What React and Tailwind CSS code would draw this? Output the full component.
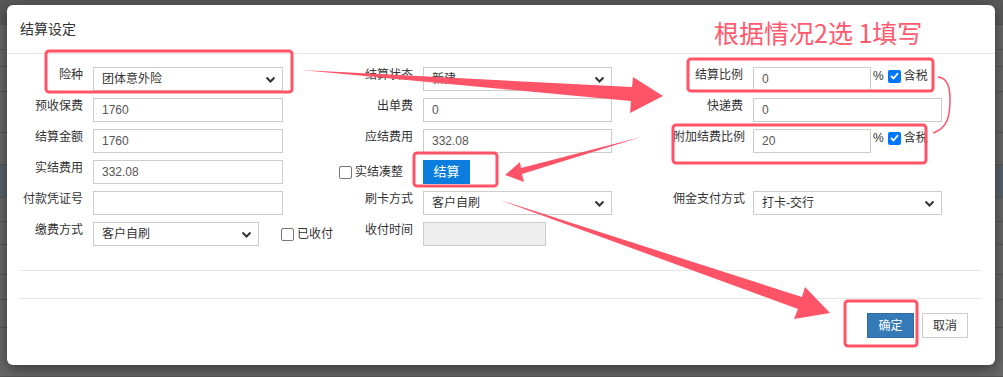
import React from 'react';

const Chevron = () => (
  <svg width="11" height="7" viewBox="0 0 11 7" className="shrink-0">
    <path d="M1.5 1.5 L5.5 5.5 L9.5 1.5" fill="none" stroke="#333" strokeWidth="2" />
  </svg>
);

const Box = ({ checked }) =>
  checked ? (
    <span className="inline-flex w-[13px] h-[13px] rounded-[2px] bg-[#0075ff] items-center justify-center shrink-0">
      <svg width="9" height="8" viewBox="0 0 9 8">
        <path d="M1 4 L3.5 6.5 L8 1.2" fill="none" stroke="white" strokeWidth="1.8" />
      </svg>
    </span>
  ) : (
    <span className="inline-block w-[13px] h-[13px] rounded-[2px] border border-[#767676] bg-white shrink-0" />
  );

const Label = ({ children }) => (
  <div className="w-[70px] mr-[10px] text-right whitespace-nowrap leading-[16px] text-[#333] shrink-0">{children}</div>
);

const Input = ({ value, w = 'w-[190px]', disabled }) => (
  <div
    className={`${w} h-[24px] border border-[#ccc] ${disabled ? 'bg-[#eee]' : 'bg-white'} pl-[8px] flex items-center text-[#555]`}
  >
    {value}
  </div>
);

const Select = ({ value, w = 'w-[190px]' }) => (
  <div className={`${w} h-[24px] border border-[#ccc] bg-white pl-[8px] pr-[6px] flex items-center justify-between text-[#333]`}>
    <span>{value}</span>
    <Chevron />
  </div>
);

const Field = ({ label, children }) => (
  <div className="flex items-start h-[24px]">
    <Label>{label}</Label>
    {children}
  </div>
);

const Tax = () => (
  <div className="flex items-center ml-[2px] text-[#333]">
    <span className="mr-[4px]">%</span>
    <Box checked />
    <span className="ml-[3px]">含税</span>
  </div>
);

const bgRows = [25, 25, 17, 25, 41, 32, 33, 24, 23, 30, 25, 28, 49];

export default function App() {
  return (
    <div className="relative w-[1003px] h-[377px] overflow-hidden bg-[#5f5f5f] font-[family-name:'Liberation_Sans','Noto_Sans_CJK_SC',sans-serif] text-[12px]">
      {/* page behind the dialog */}
      <div className="flex flex-col">
        {bgRows.map((h, i) => (
          <div
            key={i}
            style={{ height: h }}
            className={`border-b border-[#555] ${i === 6 ? 'bg-[#57626c]' : i === 0 ? 'bg-[#585858]' : 'bg-[#676767]'}`}
          />
        ))}
      </div>

      {/* dialog */}
      <div className="absolute left-[7px] top-[5px] w-[988px] h-[360px] bg-white rounded-[6px] shadow-[0_4px_14px_rgba(0,0,0,0.45)] flex flex-col">
        <div className="h-[49px] border-b border-[#e5e5e5] flex items-center px-[13px] text-[14px] text-[#333]">结算设定</div>

        <div className="pt-[13px] pl-[6px] grid grid-cols-[330px_330px_328px] gap-y-[7px]">
          <Field label="险种"><Select value="团体意外险" /></Field>
          <Field label="结算状态"><Select value="新建" w="w-[189px]" /></Field>
          <Field label="结算比例">
            <Input value="0" w="w-[118px]" />
            <Tax />
          </Field>

          <Field label="预收保费"><Input value="1760" /></Field>
          <Field label="出单费"><Input value="0" w="w-[189px]" /></Field>
          <Field label="快递费"><Input value="0" w="w-[189px]" /></Field>

          <Field label="结算金额"><Input value="1760" /></Field>
          <Field label="应结费用"><Input value="332.08" w="w-[189px]" /></Field>
          <Field label="附加结费比例">
            <Input value="20" w="w-[118px]" />
            <Tax />
          </Field>

          <Field label="实结费用"><Input value="332.08" /></Field>
          <div className="flex items-center h-[24px]">
            <div className="w-[80px] pr-[20px] flex items-center justify-end gap-[3px] text-[#333] whitespace-nowrap shrink-0">
              <Box />
              <span>实结凑整</span>
            </div>
            <button className="w-[47px] h-[24px] bg-[#0b7dde] text-white text-[13px]">结算</button>
          </div>
          <div />

          <Field label="付款凭证号"><Input value="" /></Field>
          <Field label="刷卡方式"><Select value="客户自刷" w="w-[189px]" /></Field>
          <Field label="佣金支付方式"><Select value="打卡-交行" w="w-[189px]" /></Field>

          <div className="flex items-start h-[24px]">
            <Label>缴费方式</Label>
            <Select value="客户自刷" w="w-[166px]" />
            <div className="flex items-center gap-[3px] ml-[22px] h-[24px] text-[#333]">
              <Box />
              <span>已收付</span>
            </div>
          </div>
          <Field label="收付时间"><Input value="" w="w-[123px]" disabled /></Field>
          <div />
        </div>

        <div className="mx-[13px] mt-[24px] border-t border-[#e5e5e5]" />
        <div className="mx-[13px] mt-[27px] border-t border-[#e5e5e5] pt-[14px] pr-[14px] flex justify-end gap-[8px]">
          <button className="w-[47px] h-[25px] bg-[#337ab7] border border-[#2e6da4] text-white text-[12px]">确定</button>
          <button className="w-[46px] h-[25px] bg-white border border-[#ccc] text-[#333] text-[12px]">取消</button>
        </div>
      </div>

      {/* annotations */}
      <div className="absolute left-[714px] top-[16px] text-[25px] leading-[32px] text-[#ff5a6e] whitespace-nowrap font-[family-name:'Noto_Sans_CJK_SC',sans-serif]">
        根据情况2选 1填写
      </div>
      <svg className="absolute left-0 top-0 pointer-events-none" width="1003" height="377" viewBox="0 0 1003 377">
        <g fill="none" stroke="#ff5468" strokeWidth="3">
          <rect x="46" y="51" width="246" height="41" rx="3" />
          <rect x="414" y="153" width="83" height="33" rx="3" />
          <rect x="688" y="59" width="245" height="32" rx="3" />
          <rect x="673" y="125" width="253" height="38" rx="3" />
          <rect x="845" y="301" width="72" height="45" rx="3" />
        </g>
        <path d="M938 77 C948 78 950 88 950 100 C950 115 948 128 933 133" fill="none" stroke="#ff5468" strokeWidth="1.5" />
        <g fill="#ff5468">
          <polygon points="301,70 632,87 633,77 663,96 630,113 631,101" />
          <polygon points="641,137 521,168 520,162 505,175 524,182 522,174" />
          <polygon points="500,200 802,297 805,287 830,313 794,319 798,309" />
        </g>
      </svg>
    </div>
  );
}
